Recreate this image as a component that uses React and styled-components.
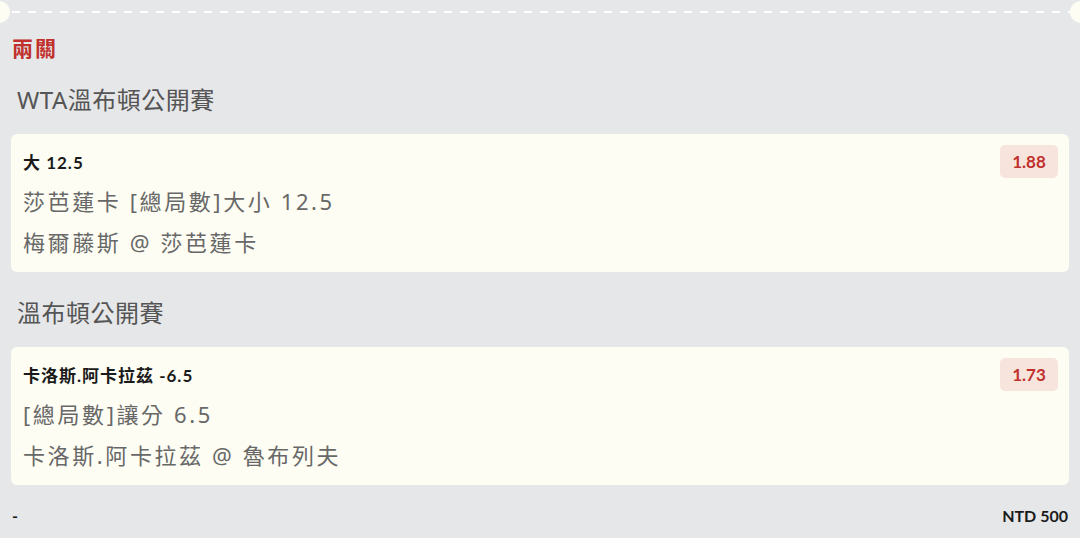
import styled, { createGlobalStyle } from "styled-components";

const GlobalStyle = createGlobalStyle`
    html, body {
        margin: 0;
        padding: 0;
        background-color: #e6e7e9;
        font-family: Lato, "Noto Sans CJK TC", sans-serif;
    }
`

const legs = [
    {
        league: "WTA溫布頓公開賽",
        selection: "大 12.5",
        odds: "1.88",
        market: "莎芭蓮卡 [總局數]大小 12.5",
        match: "梅爾藤斯 @ 莎芭蓮卡",
    },
    {
        league: "溫布頓公開賽",
        selection: "卡洛斯.阿卡拉茲 -6.5",
        odds: "1.73",
        market: "[總局數]讓分 6.5",
        match: "卡洛斯.阿卡拉茲 @ 魯布列夫",
    },
]

function LegCard({ league, selection, odds, market, match }) {
    return (
        <>
            <League>{league}</League>
            <Card>
                <CardHead>
                    <Selection>{selection}</Selection>
                    <Odds>{odds}</Odds>
                </CardHead>
                <Line>{market}</Line>
                <Line>{match}</Line>
            </Card>
        </>
    )
}

export default function App() {
    return (
        <Ticket>
            <GlobalStyle />
            <Perforation />
            <BetType>兩關</BetType>
            {legs.map((leg) => (
                <LegCard key={leg.league} {...leg} />
            ))}
            <Footer>
                <span>-</span>
                <span>NTD 500</span>
            </Footer>
        </Ticket>
    )
}

const Ticket = styled.div`
    width: 1080px;
    height: 538px;
    overflow: hidden;
    padding: 0 11px;
    box-sizing: border-box;
`

const Perforation = styled.div`
    position: relative;
    height: 24px;
    margin: 0 -11px;
    background-image: linear-gradient(to right, #ffffff 8px, transparent 8px);
    background-size: 16px 2px;
    background-repeat: repeat-x;
    background-position: 12px 11px;

    &::before, &::after {
        content: "";
        position: absolute;
        top: 1px;
        width: 22px;
        height: 22px;
        border-radius: 50%;
        background-color: #fdfdf3;
    }
    &::before { left: -12px; }
    &::after { right: -12px; }
`

const BetType = styled.div`
    margin-top: 9px;
    line-height: 30px;
    font-size: 21px;
    font-weight: 700;
    letter-spacing: 2px;
    color: #c0302c;
    padding-left: 1px;
`

const League = styled.div`
    margin-top: 17px;
    padding-left: 6px;
    line-height: 40px;
    font-family: "Noto Sans", "Noto Sans CJK TC", sans-serif;
    font-size: 24px;
    letter-spacing: 0.5px;
    color: #555555;
`

const Card = styled.div`
    margin-top: 14px;
    padding: 11px 11px 9px 12px;
    border-radius: 6px;
    background-color: #fdfdf3;

    & + div { margin-top: 21px; }
`

const CardHead = styled.div`
    display: flex;
    align-items: center;
    justify-content: space-between;
    height: 33px;
    margin-bottom: 3px;
`

const Selection = styled.span`
    font-size: 17px;
    font-weight: 700;
    letter-spacing: 1px;
    color: #1a1a1a;
`

const Odds = styled.span`
    display: flex;
    align-items: center;
    justify-content: center;
    width: 58px;
    height: 33px;
    border-radius: 5px;
    background-color: #f7e4dd;
    color: #c0302c;
    font-size: 17px;
    font-weight: 700;
`

const Line = styled.div`
    line-height: 41px;
    font-family: "Noto Sans", "Noto Sans CJK TC", sans-serif;
    font-size: 22px;
    letter-spacing: 2.6px;
    color: #686868;
`

const Footer = styled.div`
    display: flex;
    justify-content: space-between;
    margin-top: 21px;
    padding: 0 1px;
    line-height: 20px;
    font-size: 16px;
    font-weight: 700;
    color: #1a1a1a;
`
